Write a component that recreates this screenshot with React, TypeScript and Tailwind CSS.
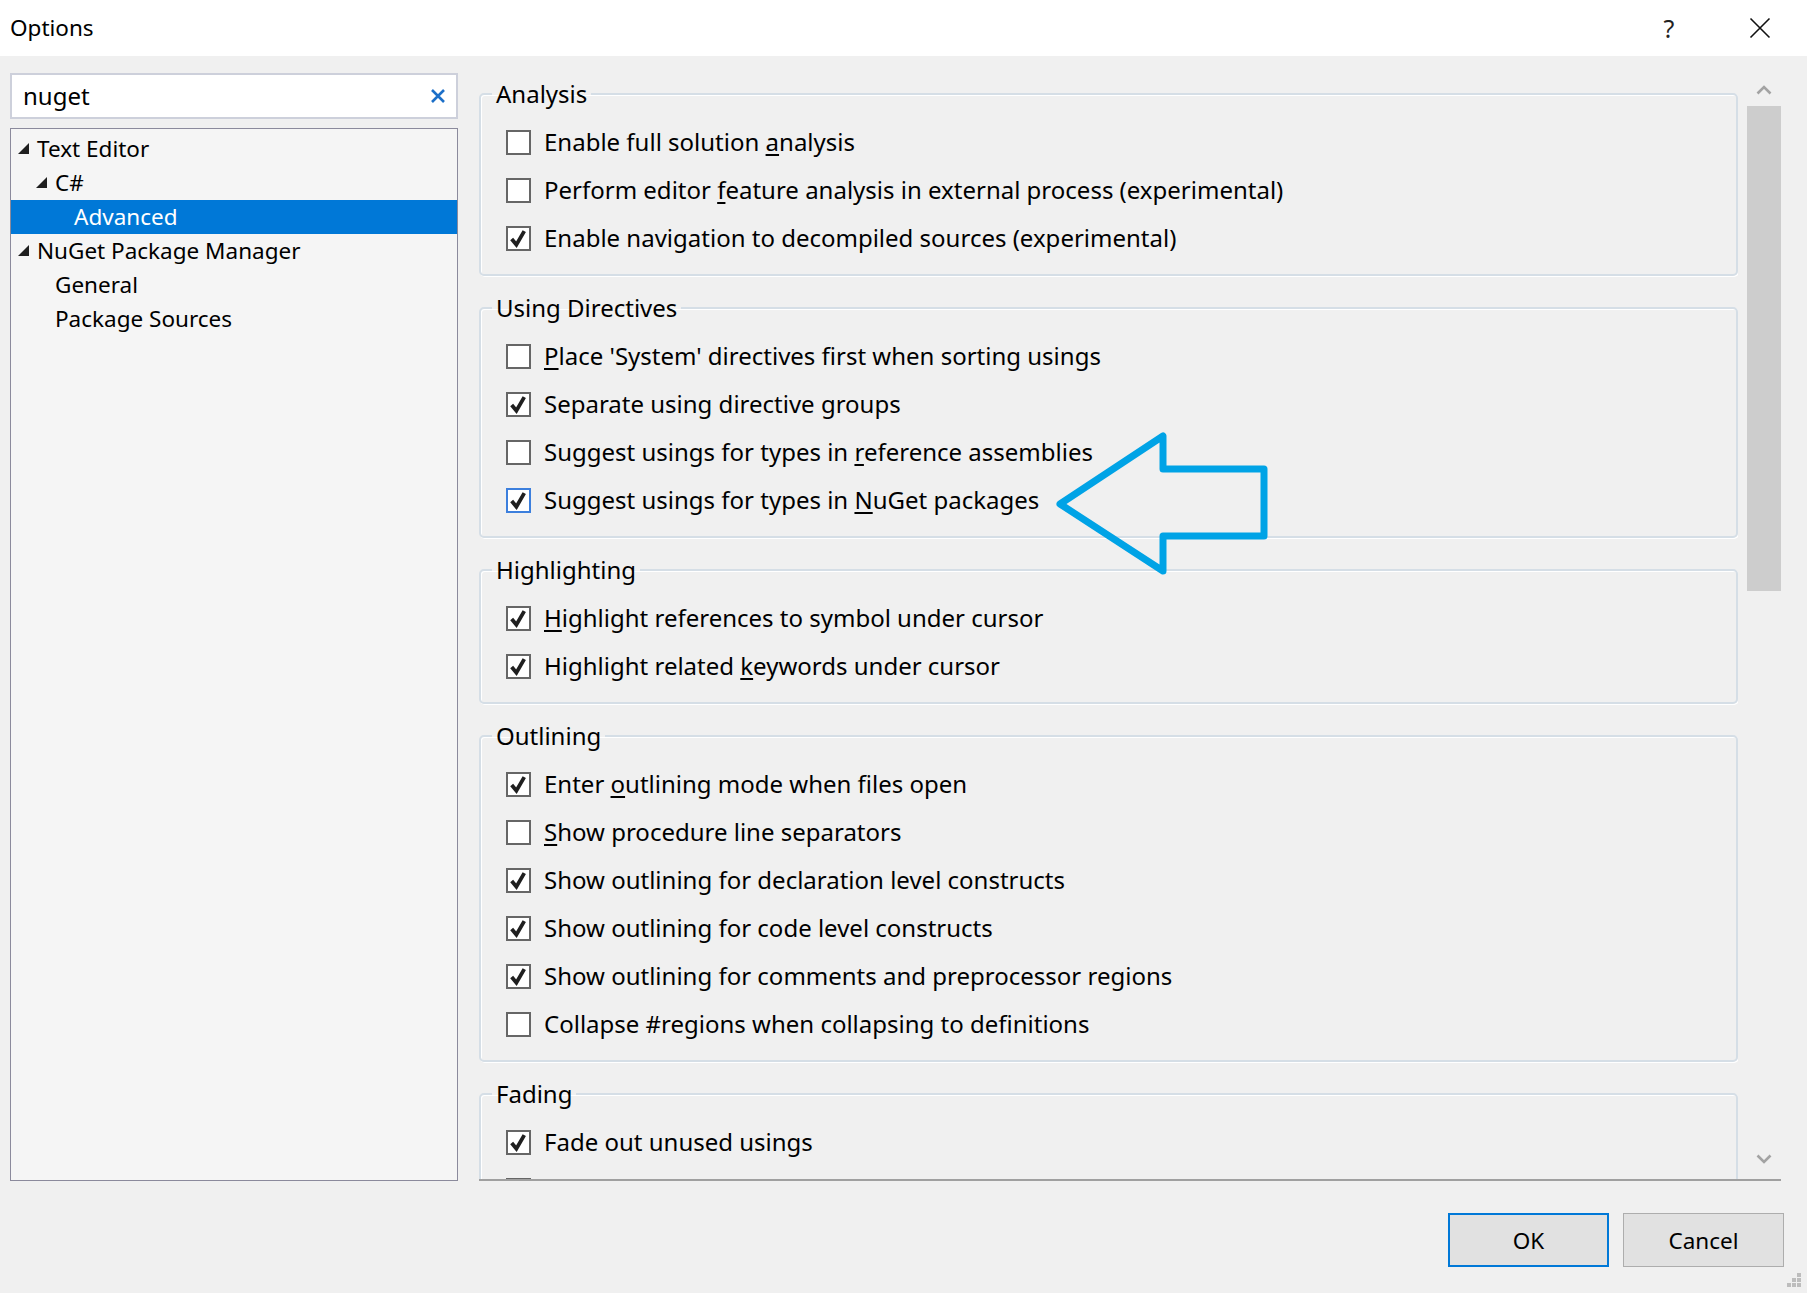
import React from 'react'

type Option = { label: string; checked: boolean; focused?: boolean }
type Group = { title: string; options: Option[] }

// '&' marks the access key letter, like in WinForms labels
const groups: Group[] = [
  {
    title: 'Analysis',
    options: [
      { label: 'Enable full solution &analysis', checked: false },
      { label: 'Perform editor &feature analysis in external process (experimental)', checked: false },
      { label: 'Enable navigation to decompiled sources (experimental)', checked: true }
    ]
  },
  {
    title: 'Using Directives',
    options: [
      { label: "&Place 'System' directives first when sorting usings", checked: false },
      { label: 'Separate using directive groups', checked: true },
      { label: 'Suggest usings for types in &reference assemblies', checked: false },
      { label: 'Suggest usings for types in &NuGet packages', checked: true, focused: true }
    ]
  },
  {
    title: 'Highlighting',
    options: [
      { label: '&Highlight references to symbol under cursor', checked: true },
      { label: 'Highlight related &keywords under cursor', checked: true }
    ]
  },
  {
    title: 'Outlining',
    options: [
      { label: 'Enter &outlining mode when files open', checked: true },
      { label: '&Show procedure line separators', checked: false },
      { label: 'Show outlining for declaration level constructs', checked: true },
      { label: 'Show outlining for code level constructs', checked: true },
      { label: 'Show outlining for comments and preprocessor regions', checked: true },
      { label: 'Collapse #regions when collapsing to definitions', checked: false }
    ]
  },
  {
    title: 'Fading',
    options: [
      { label: 'Fade out unused usings', checked: true },
      { label: '', checked: true }
    ]
  }
]

const tree = [
  { label: 'Text Editor', level: 0, expander: true },
  { label: 'C#', level: 1, expander: true },
  { label: 'Advanced', level: 2, selected: true },
  { label: 'NuGet Package Manager', level: 0, expander: true },
  { label: 'General', level: 1 },
  { label: 'Package Sources', level: 1 }
]

const indent = ['pl-[7px]', 'pl-[25px]', 'pl-[44px]']

const AccessLabel = ({ text }: { text: string }) => {
  const i = text.indexOf('&')
  if (i < 0) return <span>{text}</span>
  return (
    <span>
      {text.slice(0, i)}
      <span className="underline underline-offset-[3px] decoration-[1.5px]">{text[i + 1]}</span>
      {text.slice(i + 2)}
    </span>
  )
}

const CheckBox = ({ checked, focused }: { checked: boolean; focused?: boolean }) => (
  <span
    className={`ml-[1px] w-[25px] h-[25px] border-2 bg-white flex items-center justify-center shrink-0 ${
      focused ? 'border-[#3c7fdd]' : 'border-[#666666]'
    }`}
  >
    {checked && (
      <svg width="21" height="21" viewBox="0 0 20 20">
        <path d="M3.5 10.5 L8 16 L15.5 3" fill="none" stroke="#1f1f1f" strokeWidth="3.6" />
      </svg>
    )}
  </span>
)

const Expander = () => (
  <svg width="19" height="11" viewBox="0 0 19 11" className="shrink-0 -mt-[2px]">
    <polygon points="11,0 11,11 0,11" fill="#1e1e1e" />
  </svg>
)

const App: React.FC = () => {
  return (
    <div className="relative w-[1807px] h-[1293px] bg-[#f0f0f0] flex flex-col overflow-hidden font-['Noto_Sans',sans-serif] text-[22.5px] text-black">
      {/* Title bar */}
      <div className="h-[56px] shrink-0 bg-white flex items-center pl-[10px] pr-[27px]">
        <span className="leading-[30px]">Options</span>
        <div className="ml-auto flex items-center gap-[51px]">
          <span className="w-[40px] text-center text-[25px] leading-[30px] text-[#222]">?</span>
          <span className="w-[40px] flex justify-center">
            <svg width="22" height="22" viewBox="0 0 22 22">
              <path d="M1.5 1.5 L20.5 20.5 M20.5 1.5 L1.5 20.5" stroke="#111" strokeWidth="1.6" />
            </svg>
          </span>
        </div>
      </div>

      {/* Body */}
      <div className="flex h-[1125px] pt-[17px] shrink-0">
        {/* Left: search + tree */}
        <div className="ml-[10px] w-[448px] flex flex-col gap-[9px]">
          <div className="h-[46px] border-2 border-[#cdd0db] bg-white flex items-center pl-[11px] pr-[10px]">
            <span className="text-[24px] leading-[32px]">nuget</span>
            <svg width="16" height="16" viewBox="0 0 16 16" className="ml-auto">
              <path d="M2 2 L14 14 M14 2 L2 14" stroke="#1c6fc8" strokeWidth="2.6" />
            </svg>
          </div>
          <div className="flex-1 border border-[#8b8a9c] bg-[#f5f5f5] pt-[3px]">
            {tree.map(item => (
              <div
                key={item.label}
                className={`h-[34px] flex items-center ${indent[item.level]} ${
                  item.selected ? 'bg-[#0078d7] text-white' : ''
                }`}
              >
                {item.expander ? <Expander /> : <span className="w-[19px] shrink-0" />}
                <span className="leading-[30px]">{item.label}</span>
              </div>
            ))}
          </div>
        </div>

        {/* Right: option groups + scrollbar */}
        <div className="ml-[21px] w-[1302px] flex border-b-2 border-[#a0a0a0]">
          <div className="w-[1259px] overflow-hidden flex flex-col gap-[16px] pt-[5px] text-[24px]">
            {groups.map(group => (
              <fieldset
                key={group.title}
                className="shrink-0 border-2 border-[#d5dee6] rounded-[5px] px-[24px] pt-[8px] pb-[12px] shadow-[1px_1px_0_0_#ffffff,inset_1px_1px_0_0_#ffffff]"
              >
                <legend className="-ml-[13px] px-[4px] leading-[32px]">{group.title}</legend>
                {group.options.map((opt, i) => (
                  <div key={i} className="h-[48px] flex items-center gap-[13px]">
                    <CheckBox checked={opt.checked} focused={opt.focused} />
                    {opt.label && (
                      <span className="leading-[32px]">
                        <AccessLabel text={opt.label} />
                      </span>
                    )}
                  </div>
                ))}
              </fieldset>
            ))}
          </div>

          {/* Scrollbar */}
          <div className="ml-[9px] w-[34px] flex flex-col">
            <div className="h-[33px] flex items-center justify-center">
              <svg width="16" height="10" viewBox="0 0 16 10">
                <polyline points="1.5,8.5 8,2 14.5,8.5" fill="none" stroke="#a3a3a3" strokeWidth="2.6" />
              </svg>
            </div>
            <div className="h-[485px] bg-[#cdcdcd]" />
            <div className="flex-1" />
            <div className="h-[40px] flex items-center justify-center">
              <svg width="16" height="10" viewBox="0 0 16 10">
                <polyline points="1.5,1.5 8,8 14.5,1.5" fill="none" stroke="#a3a3a3" strokeWidth="2.6" />
              </svg>
            </div>
          </div>
        </div>
      </div>

      {/* Footer buttons */}
      <div className="flex-1 flex justify-end items-start pt-[32px] pr-[23px] gap-[14px]">
        <button className="w-[161px] h-[54px] border-2 border-[#0078d7] bg-[#e1e1e1] leading-[30px] pt-[1px]">OK</button>
        <button className="w-[161px] h-[54px] border border-[#adadad] bg-[#e1e1e1] leading-[30px] pt-[1px]">Cancel</button>
      </div>

      {/* Callout arrow drawn over the options */}
      <svg
        width="225"
        height="155"
        viewBox="0 0 225 155"
        className="absolute left-[1050px] top-[426px] pointer-events-none"
      >
        <polygon
          points="10,78 113,10 113,43 214,43 214,110 113,110 113,145"
          fill="none"
          stroke="#00a3e6"
          strokeWidth="7"
          strokeLinejoin="round"
        />
      </svg>

      {/* Resize grip */}
      <svg width="16" height="16" viewBox="0 0 16 16" className="absolute right-[5px] bottom-[5px]">
        <rect x="11" y="1" width="4" height="4" fill="#bdbdbd" />
        <rect x="6" y="6" width="4" height="4" fill="#bdbdbd" />
        <rect x="11" y="6" width="4" height="4" fill="#bdbdbd" />
        <rect x="1" y="11" width="4" height="4" fill="#bdbdbd" />
        <rect x="6" y="11" width="4" height="4" fill="#bdbdbd" />
        <rect x="11" y="11" width="4" height="4" fill="#bdbdbd" />
      </svg>
    </div>
  )
}

export default App
